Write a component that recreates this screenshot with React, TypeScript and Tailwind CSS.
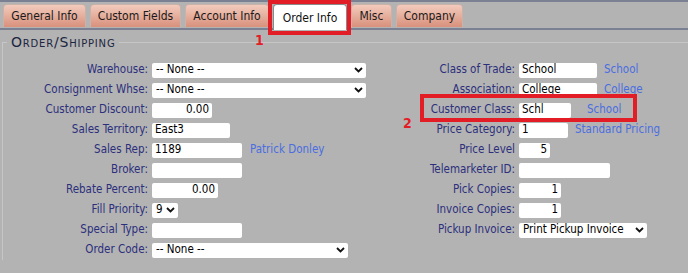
import React from 'react';

const FONT = { fontFamily: '"DejaVu Sans Condensed", "DejaVu Sans", Verdana, sans-serif', fontStretch: 'condensed' as const };

const tabs = [
  { label: 'General Info', w: 'w-[83px]' },
  { label: 'Custom Fields', w: 'w-[91px]' },
  { label: 'Account Info', w: 'w-[84px]' },
  { label: 'Order Info', w: 'w-[74px]', active: true },
  { label: 'Misc', w: 'w-[41px]' },
  { label: 'Company', w: 'w-[67px]' },
];

const Chevron = () => (
  <svg width="9" height="6" viewBox="0 0 9 6" className="shrink-0">
    <polyline points="1,1 4.5,4.5 8,1" fill="none" stroke="#111" strokeWidth="1.8" />
  </svg>
);

const Box = ({ w, value, right }: { w: string; value?: string; right?: boolean }) => (
  <div
    className={`${w} h-[15px] bg-white rounded-[2px] px-[3px] flex items-center text-[11.5px] text-black ${right ? 'justify-end' : ''}`}
  >
    {value}
  </div>
);

const Select = ({ w, value }: { w: string; value: string }) => (
  <div className={`${w} h-[15px] bg-white rounded-[2px] pl-[4px] pr-[3px] flex items-center justify-between text-[11.5px] text-black`}>
    <span>{value}</span>
    <Chevron />
  </div>
);

const Link = ({ children, ml }: { children: string; ml: string }) => (
  <span className={`${ml} text-[11.5px] text-[#4a6ee0]`}>{children}</span>
);

type Row = { label: string; control: React.ReactNode };

const left: Row[] = [
  { label: 'Warehouse:', control: <Select w="w-[214px]" value="-- None --" /> },
  { label: 'Consignment Whse:', control: <Select w="w-[214px]" value="-- None --" /> },
  { label: 'Customer Discount:', control: <Box w="w-[60px]" value="0.00" right /> },
  { label: 'Sales Territory:', control: <Box w="w-[78px]" value="East3" /> },
  {
    label: 'Sales Rep:',
    control: (
      <>
        <Box w="w-[90px]" value="1189" />
        <Link ml="ml-[8px]">Patrick Donley</Link>
      </>
    ),
  },
  { label: 'Broker:', control: <Box w="w-[90px]" /> },
  { label: 'Rebate Percent:', control: <Box w="w-[66px]" value="0.00" right /> },
  { label: 'Fill Priority:', control: <Select w="w-[26px]" value="9" /> },
  { label: 'Special Type:', control: <Box w="w-[90px]" /> },
  { label: 'Order Code:', control: <Select w="w-[196px]" value="-- None --" /> },
];

const right: Row[] = [
  {
    label: 'Class of Trade:',
    control: (
      <>
        <Box w="w-[78px]" value="School" />
        <Link ml="ml-[7px]">School</Link>
      </>
    ),
  },
  {
    label: 'Association:',
    control: (
      <>
        <Box w="w-[78px]" value="College" />
        <Link ml="ml-[7px]">College</Link>
      </>
    ),
  },
  {
    label: 'Customer Class:',
    control: (
      <>
        <Box w="w-[52px]" value="Schl" />
        <Link ml="ml-[16px]">School</Link>
      </>
    ),
  },
  {
    label: 'Price Category:',
    control: (
      <>
        <Box w="w-[49px]" value="1" />
        <Link ml="ml-[7px]">Standard Pricing</Link>
      </>
    ),
  },
  { label: 'Price Level', control: <Box w="w-[31px]" value="5" right /> },
  { label: 'Telemarketer ID:', control: <Box w="w-[91px]" /> },
  { label: 'Pick Copies:', control: <Box w="w-[42px]" value="1" right /> },
  { label: 'Invoice Copies:', control: <Box w="w-[42px]" value="1" right /> },
  { label: 'Pickup Invoice:', control: <Select w="w-[128px]" value="Print Pickup Invoice" /> },
];

function Column({ rows, labelW }: { rows: Row[]; labelW: string }) {
  return (
    <div className="flex flex-col">
      {rows.map((r) => (
        <div key={r.label} className="h-[20px] flex items-center">
          <span className={`${labelW} shrink-0 text-right pr-[4px] text-[11.5px] text-[#2c2f7c] whitespace-nowrap`}>
            {r.label}
          </span>
          {r.control}
        </div>
      ))}
    </div>
  );
}

export default function App() {
  return (
    <div className="relative w-[688px] h-[273px] bg-[#b3b3b3] overflow-hidden" style={FONT}>
      {/* tab strip */}
      <div className="h-[30px] border-t-2 border-b-2 border-[#7b8092] flex items-end gap-[4px] pl-[3px]">
        {tabs.map((t) =>
          t.active ? (
            <div
              key={t.label}
              className={`${t.w} h-[26px] -mb-[2px] bg-white border border-b-0 border-[#8a8a8a] rounded-t-[4px] flex items-center justify-center text-[12px] text-[#111]`}
            >
              {t.label}
            </div>
          ) : (
            <div
              key={t.label}
              className={`${t.w} h-[23px] mb-[1px] bg-gradient-to-b from-[#f2cbbd] to-[#d8917c] border border-b-0 border-[#c8b2aa] rounded-t-[4px] flex items-center justify-center text-[12px] text-[#1a1a1a]`}
            >
              {t.label}
            </div>
          ),
        )}
      </div>

      {/* section */}
      <fieldset className="ml-[2px] mt-[5px] border-t border-l border-[#c6c6c6] p-0 m-0">
        <legend
          className="ml-[4px] px-[4px] text-[14px] leading-[14px] tracking-[0.8px] text-[#1c2640]"
          style={{ fontVariant: 'small-caps', fontFamily: '"DejaVu Sans", Verdana, sans-serif', fontStretch: 'normal' }}
        >
          Order/Shipping
        </legend>
        <div className="flex pt-[11px]">
          <Column rows={left} labelW="w-[149px]" />
          <div className="ml-[7px]">
            <Column rows={right} labelW="w-[146px]" />
          </div>
        </div>
      </fieldset>

      {/* annotations */}
      <div className="absolute left-[268px] top-0 w-[83px] h-[35px] border-[4px] border-[#e31d25]" />
      <div className="absolute left-[255px] top-[30px] text-[14px] font-bold text-[#e31d25]">1</div>
      <div className="absolute left-[420px] top-[94px] w-[217px] h-[28px] border-[4px] border-[#e31d25]" />
      <div className="absolute left-[403px] top-[113px] text-[14px] font-bold text-[#e31d25]">2</div>
    </div>
  );
}
